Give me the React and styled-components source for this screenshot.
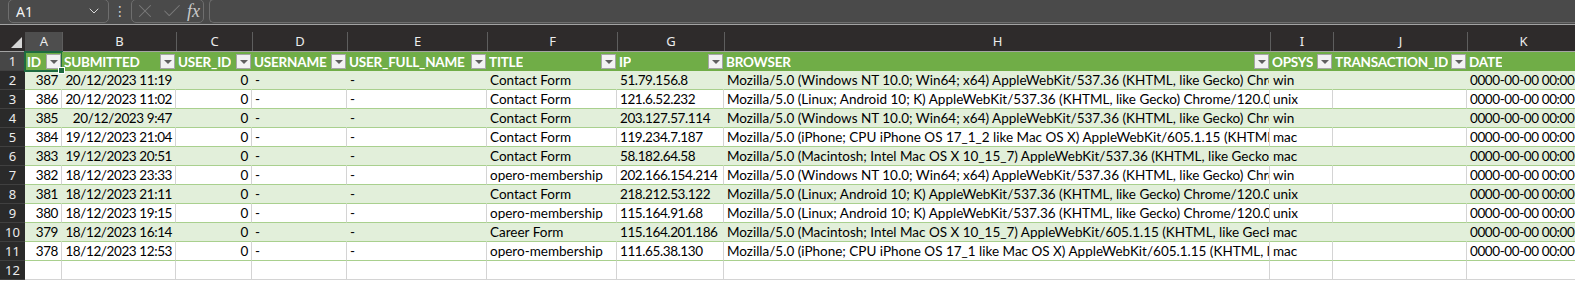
import React from 'react';
import styled, { createGlobalStyle } from 'styled-components';
import { ChevronDown, X, Check } from 'lucide-react';

const GlobalStyle = createGlobalStyle`
  body {
    margin: 0;
    background: #ffffff;
    overflow: hidden;
  }
`;

const COLS = '25px 37px 114px 76px 95px 140px 130px 107px 546px 63px 134px 240px';

const Wrapper = styled.div`
  width: 1575px;
  height: 281px;
  overflow: hidden;
  font-family: 'Lato', 'Liberation Sans', sans-serif;
`;

const TopBar = styled.div`
  height: 25px;
  box-sizing: border-box;
  background: #4a4a4a;
  border-bottom: 1px solid #a3a3a3;
  display: flex;
  align-items: flex-end;
  padding: 0 0 1px 8px;
`;

const NameBox = styled.div`
  width: 101px;
  height: 24px;
  box-sizing: border-box;
  border: 1px solid #6e6e6e;
  border-radius: 5px;
  display: flex;
  align-items: center;
  justify-content: space-between;
  padding: 0 6px 0 7px;
  color: #f2f2f2;
  font-family: 'Noto Sans', 'Open Sans', sans-serif;
  font-size: 14px;
`;

const Dots = styled.div`
  width: 22px;
  text-align: center;
  color: #d0d0d0;
  font-family: 'DejaVu Sans', sans-serif;
  font-size: 14px;
  line-height: 23px;
`;

const FxBox = styled.div`
  width: 73px;
  height: 24px;
  box-sizing: border-box;
  border: 1px solid #6e6e6e;
  border-radius: 5px;
  display: flex;
  align-items: center;
  justify-content: space-between;
  padding: 0 3px 0 2px;
  color: #7a7a7a;
`;

const Fx = styled.span`
  font-family: 'Liberation Serif', serif;
  font-style: italic;
  font-size: 18px;
  line-height: 20px;
  color: #c9c9c9;
`;

const FormulaInput = styled.div`
  flex: 1;
  height: 24px;
  box-sizing: border-box;
  margin-left: 5px;
  border: 1px solid #6e6e6e;
  border-right: none;
  border-radius: 5px 0 0 5px;
`;

const LetterBand = styled.div`
  display: grid;
  grid-template-columns: ${COLS};
  height: 27px;
  box-sizing: border-box;
  background: #2e2b2b;
  border-bottom: 1px solid #a3a3a3;
  align-items: end;
`;

const Corner = styled.div`
  height: 19px;
  display: flex;
  align-items: flex-end;
  justify-content: flex-end;
  padding: 0 3px 3px 0;
  box-sizing: border-box;
`;

const Letter = styled.div`
  height: 19px;
  box-sizing: border-box;
  border-left: 1px solid ${(p) => (p.$first ? 'transparent' : '#5e5e5e')};
  background: ${(p) => (p.$active ? '#4e4e4e' : 'transparent')};
  color: #ececec;
  font-family: 'Noto Sans', 'Open Sans', sans-serif;
  font-size: 13px;
  line-height: 19px;
  text-align: center;
  padding-right: ${(p) => p.$shift || 0}px;
`;

const Row = styled.div`
  display: grid;
  grid-template-columns: ${COLS};
  height: 19px;
`;

const RowHead = styled.div`
  box-sizing: border-box;
  background: ${(p) => (p.$active ? '#474747' : '#2a2a2a')};
  border-bottom: 1px solid #404040;
  color: #ececec;
  font-family: 'Noto Sans', 'Open Sans', sans-serif;
  font-size: 13px;
  line-height: 18px;
  text-align: center;
`;

const fills = {
  band: '#e2efda',
  plain: '#ffffff',
};

const Cell = styled.div`
  box-sizing: border-box;
  background: ${(p) => fills[p.$kind]};
  border-right: 1px solid ${(p) => (p.$kind === 'plain' ? '#d4d4d4' : fills[p.$kind])};
  border-bottom: 1px solid ${(p) => (p.$table ? '#a9d08e' : '#d4d4d4')};
  color: #000000;
  font-size: 13.5px;
  line-height: 18px;
  letter-spacing: ${(p) => (p.$tight ? '-0.4px' : '0')};
  white-space: nowrap;
  overflow: hidden;
  text-align: ${(p) => (p.$num ? 'right' : 'left')};
  padding: ${(p) => (p.$num ? '0 3px 0 0' : '0 0 0 3px')};
`;

const HeadCell = styled.div`
  position: relative;
  box-sizing: border-box;
  background: #70ad47;
  display: flex;
  align-items: center;
  justify-content: space-between;
  padding: 0 1px 0 2px;
  color: #ffffff;
  font-weight: 700;
  font-size: 13.5px;
  letter-spacing: -0.2px;
  white-space: nowrap;
  overflow: ${(p) => (p.$selected ? 'visible' : 'hidden')};

  & > span {
    min-width: 0;
    overflow: hidden;
  }

  ${(p) =>
    p.$selected &&
    `
    &::after {
      content: '';
      position: absolute;
      left: -1px;
      top: -1px;
      right: -1px;
      bottom: -1px;
      border: 2px solid #1e6b40;
      pointer-events: none;
    }
    &::before {
      content: '';
      position: absolute;
      right: -3px;
      bottom: -3px;
      width: 5px;
      height: 5px;
      background: #1e6b40;
      border: 1px solid #ffffff;
      z-index: 2;
    }
  `}
`;

const FilterBtn = styled.div`
  flex: none;
  width: 15px;
  height: 15px;
  box-sizing: border-box;
  background: #f2f2f2;
  border: 1px solid #a6a6a6;
  display: flex;
  align-items: center;
  justify-content: center;
  margin-left: 2px;

  &::after {
    content: '';
    border-left: 4px solid transparent;
    border-right: 4px solid transparent;
    border-top: 4px solid #5f5f5f;
  }
`;

const letters = ['A', 'B', 'C', 'D', 'E', 'F', 'G', 'H', 'I', 'J', 'K'];
const headers = ['ID', 'SUBMITTED', 'USER_ID', 'USERNAME', 'USER_FULL_NAME', 'TITLE', 'IP', 'BROWSER', 'OPSYS', 'TRANSACTION_ID', 'DATE'];

const UA = {
  win: 'Mozilla/5.0 (Windows NT 10.0; Win64; x64) AppleWebKit/537.36 (KHTML, like Gecko) Chrome/120.0.0.0 Safari/537.36',
  android: 'Mozilla/5.0 (Linux; Android 10; K) AppleWebKit/537.36 (KHTML, like Gecko) Chrome/120.0.0.0 Mobile Safari/537.36',
  iphone2: 'Mozilla/5.0 (iPhone; CPU iPhone OS 17_1_2 like Mac OS X) AppleWebKit/605.1.15 (KHTML, like Gecko) Version/17.1.2 Mobile/15E148 Safari/604.1',
  macChrome: 'Mozilla/5.0 (Macintosh; Intel Mac OS X 10_15_7) AppleWebKit/537.36 (KHTML, like Gecko) Chrome/120.0.0.0 Safari/537.36',
  macSafari: 'Mozilla/5.0 (Macintosh; Intel Mac OS X 10_15_7) AppleWebKit/605.1.15 (KHTML, like Gecko) Version/17.1 Safari/605.1.15',
  iphone: 'Mozilla/5.0 (iPhone; CPU iPhone OS 17_1 like Mac OS X) AppleWebKit/605.1.15 (KHTML, like Gecko) Version/17.1 Mobile/15E148 Safari/604.1',
};

const rows = [
  ['387', '20/12/2023 11:19', 'Contact Form', '51.79.156.8', UA.win, 'win'],
  ['386', '20/12/2023 11:02', 'Contact Form', '121.6.52.232', UA.android, 'unix'],
  ['385', '20/12/2023 9:47', 'Contact Form', '203.127.57.114', UA.win, 'win'],
  ['384', '19/12/2023 21:04', 'Contact Form', '119.234.7.187', UA.iphone2, 'mac'],
  ['383', '19/12/2023 20:51', 'Contact Form', '58.182.64.58', UA.macChrome, 'mac'],
  ['382', '18/12/2023 23:33', 'opero-membership', '202.166.154.214', UA.win, 'win'],
  ['381', '18/12/2023 21:11', 'Contact Form', '218.212.53.122', UA.android, 'unix'],
  ['380', '18/12/2023 19:15', 'opero-membership', '115.164.91.68', UA.android, 'unix'],
  ['379', '18/12/2023 16:14', 'Career Form', '115.164.201.186', UA.macSafari, 'mac'],
  ['378', '18/12/2023 12:53', 'opero-membership', '111.65.38.130', UA.iphone, 'mac'],
];

function App() {
  return (
    <Wrapper>
      <GlobalStyle />
      <TopBar>
        <NameBox>
          <span>A1</span>
          <ChevronDown size={16} color="#d8d8d8" strokeWidth={1.5} />
        </NameBox>
        <Dots>⋮</Dots>
        <FxBox>
          <X size={22} strokeWidth={1.1} />
          <Check size={22} strokeWidth={1.1} />
          <Fx>fx</Fx>
        </FxBox>
        <FormulaInput />
      </TopBar>

      <LetterBand>
        <Corner>
          <svg width="11" height="11" viewBox="0 0 11 11">
            <polygon points="11,0 11,11 0,11" fill="#d6d6d6" />
          </svg>
        </Corner>
        {letters.map((l, i) => (
          <Letter key={l} $first={i === 0} $active={i === 0} $shift={l === 'K' ? 128 : 0}>
            {l}
          </Letter>
        ))}
      </LetterBand>

      <Row>
        <RowHead $active>1</RowHead>
        {headers.map((h, i) => (
          <HeadCell key={h} $selected={i === 0}>
            <span>{h}</span>
            <FilterBtn />
          </HeadCell>
        ))}
      </Row>

      {rows.map((r, idx) => {
        const kind = idx % 2 === 0 ? 'band' : 'plain';
        return (
          <Row key={r[0]}>
            <RowHead>{idx + 2}</RowHead>
            <Cell $kind={kind} $table $num $tight>{r[0]}</Cell>
            <Cell $kind={kind} $table $num $tight>{r[1]}</Cell>
            <Cell $kind={kind} $table $num $tight>0</Cell>
            <Cell $kind={kind} $table>-</Cell>
            <Cell $kind={kind} $table>-</Cell>
            <Cell $kind={kind} $table>{r[2]}</Cell>
            <Cell $kind={kind} $table $tight>{r[3]}</Cell>
            <Cell $kind={kind} $table>{r[4]}</Cell>
            <Cell $kind={kind} $table>{r[5]}</Cell>
            <Cell $kind={kind} $table></Cell>
            <Cell $kind={kind} $table $tight>0000-00-00 00:00:00</Cell>
          </Row>
        );
      })}

      <Row>
        <RowHead>12</RowHead>
        {letters.map((l) => (
          <Cell key={l} $kind="plain" />
        ))}
      </Row>
    </Wrapper>
  );
}

export default App;
